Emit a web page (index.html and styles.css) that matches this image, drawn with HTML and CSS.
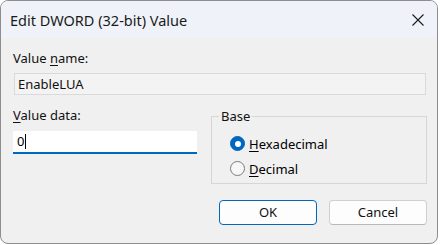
FILE: index.html
```html
<!DOCTYPE html>
<html>
<head>
<meta charset="utf-8">
<link rel="stylesheet" href="styles.css">
</head>
<body>
<div class="window">
  <div class="titlebar">
    <span class="title">Edit DWORD (32-bit) Value</span>
    <span class="close">
      <svg width="12" height="12" viewBox="0 0 12 12"><path d="M0.5 0.5 L11.5 11.5 M11.5 0.5 L0.5 11.5" stroke="#1b1b1b" stroke-width="1.1" fill="none"/></svg>
    </span>
  </div>
  <div class="content">
    <div class="label">Value <u>n</u>ame:</div>
    <div class="readonly">EnableLUA</div>
    <div class="row">
      <div class="left">
        <div class="label"><u>V</u>alue data:</div>
        <div class="input">0<span class="caret"></span></div>
      </div>
      <fieldset class="group">
        <legend>Base</legend>
        <div class="radio checked"><span class="dot"></span><span><u>H</u>exadecimal</span></div>
        <div class="radio"><span class="dot"></span><span><u>D</u>ecimal</span></div>
      </fieldset>
    </div>
    <div class="buttons">
      <div class="btn default">OK</div>
      <div class="btn">Cancel</div>
    </div>
  </div>
</div>
</body>
</html>
```

FILE: styles.css
```css
html, body {
  margin: 0;
  padding: 0;
  background: #ffffff;
}
body {
  font-family: "Noto Sans", "Open Sans", sans-serif;
  font-size: 13px;
  color: #000;
}
u { text-decoration-thickness: 1px; text-underline-offset: 2px; }
.window {
  box-sizing: border-box;
  width: 438px;
  height: 244px;
  border: 1px solid #8e8e8e;
  border-radius: 8px;
  overflow: hidden;
  background: #f0f0f0;
}
.titlebar {
  height: 37px;
  background: #eff3f9;
  display: flex;
  align-items: center;
  padding-left: 9px;
  padding-right: 13px;
}
.title {
  font-size: 14.5px;
  flex: 1;
  color: #1a1a1a;
  padding-top: 1px;
}
.close {
  display: flex;
  width: 12px;
  height: 12px;
  margin-top: 1px;
}
.content {
  padding: 11px 10px 0 12px;
}
.label {
  line-height: 18px;
  height: 18px;
  color: #111;
}
.readonly {
  box-sizing: border-box;
  margin-top: 6px;
  height: 22px;
  width: 412px;
  margin-left: 1px;
  border: 1px solid #dadada;
  background: #f3f3f3;
  padding-left: 3px;
  line-height: 20px;
  color: #111;
}
.row {
  display: flex;
  margin-top: 11px;
  gap: 14px;
}
.left {
  width: 184px;
}
.input {
  box-sizing: border-box;
  margin-top: 7px;
  height: 23px;
  background: #fff;
  border-bottom: 2px solid #0067c0;
  padding-left: 4px;
  line-height: 21px;
  display: flex;
  align-items: center;
}
.caret {
  display: inline-block;
  width: 1px;
  height: 15px;
  background: #000;
  margin-left: 1px;
}
.group {
  box-sizing: border-box;
  margin: 2px 0 0 0;
  width: 216px;
  height: 76px;
  border: 1px solid #d6d6d6;
  padding: 7px 0 0 18px;
}
.group legend {
  padding: 0 2px;
  margin-left: -11px;
  line-height: 16px;
  color: #111;
}
.radio {
  display: flex;
  align-items: center;
  height: 25px;
  gap: 4px;
}
.dot {
  box-sizing: border-box;
  width: 15px;
  height: 15px;
  border-radius: 50%;
  border: 1px solid #7a7a7a;
  background: #f7f7f7;
  display: flex;
  align-items: center;
  justify-content: center;
}
.radio.checked .dot {
  background: #0067c0;
  border-color: #0067c0;
}
.radio.checked .dot::after {
  content: "";
  width: 6px;
  height: 6px;
  border-radius: 50%;
  background: #fff;
}
.buttons {
  display: flex;
  justify-content: flex-end;
  gap: 12px;
  margin-top: 16px;
  padding-right: 0px;
}
.btn {
  box-sizing: border-box;
  width: 98px;
  height: 25px;
  border: 1px solid #d0d0d0;
  border-bottom-color: #b8b8b8;
  border-radius: 4px;
  background: #fdfdfd;
  text-align: center;
  line-height: 23px;
  color: #111;
}
.btn.default {
  border-color: #0067c0;
}
```
